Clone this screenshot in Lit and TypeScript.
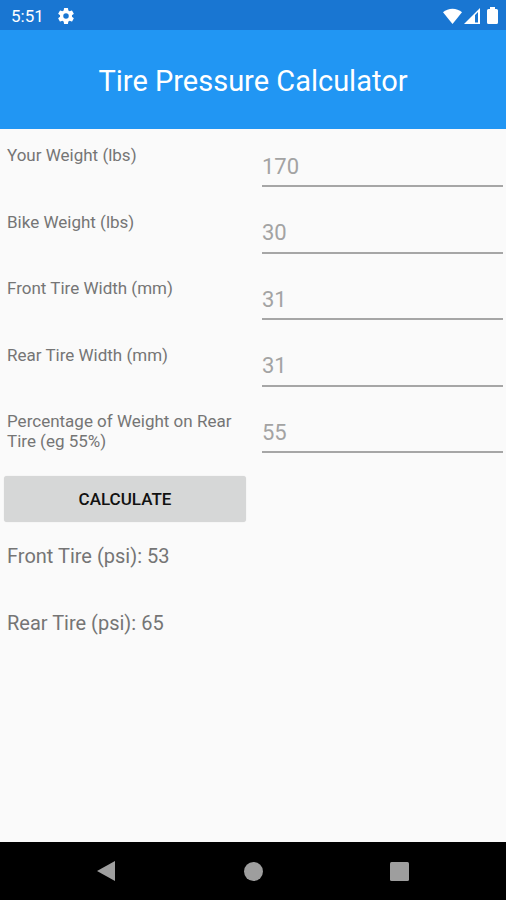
import { LitElement, html, css, svg } from "lit";
import { customElement, state } from "lit/decorators.js";

interface Field {
  id: string;
  label: string;
  hint: number;
}

const FIELDS: Field[] = [
  { id: "rider", label: "Your Weight (lbs)", hint: 170 },
  { id: "bike", label: "Bike Weight (lbs)", hint: 30 },
  { id: "front", label: "Front Tire Width (mm)", hint: 31 },
  { id: "rear", label: "Rear Tire Width (mm)", hint: 31 },
  { id: "share", label: "Percentage of Weight on Rear Tire (eg 55%)", hint: 55 },
];

const PRESSURE_FACTOR = 18.3;

const COG = svg`<path fill-rule="evenodd" d="M19.14 12.94c.04-.3.06-.61.06-.94 0-.32-.02-.64-.07-.94l2.03-1.58a.49.49 0 0 0 .12-.61l-1.92-3.32a.49.49 0 0 0-.59-.22l-2.39.96a7 7 0 0 0-1.62-.94l-.36-2.54a.48.48 0 0 0-.48-.41h-3.84a.48.48 0 0 0-.47.41l-.36 2.54c-.59.24-1.13.57-1.62.94l-2.39-.96a.48.48 0 0 0-.59.22L2.74 8.87a.48.48 0 0 0 .12.61l2.03 1.58c-.05.3-.09.63-.09.94s.02.64.07.94l-2.03 1.58a.49.49 0 0 0-.12.61l1.92 3.32c.12.22.37.29.59.22l2.39-.96c.5.38 1.03.7 1.62.94l.36 2.54c.05.24.24.41.48.41h3.84c.24 0 .44-.17.47-.41l.36-2.54a7 7 0 0 0 1.62-.94l2.39.96c.22.08.47 0 .59-.22l1.92-3.32a.48.48 0 0 0-.12-.61zM12 15.3a3.3 3.3 0 1 1 0-6.6 3.3 3.3 0 0 1 0 6.6z"/>`;

@customElement("app-root")
export class AppRoot extends LitElement {
  static styles = css`
    :host {
      display: flex;
      flex-direction: column;
      min-height: 100vh;
      background: #fafafa;
      color: #757575;
      font-family: Roboto, "Liberation Sans", sans-serif;
      font-size: 17px;
      line-height: 20px;
    }
    svg {
      display: block;
      fill: currentColor;
    }
    .status {
      display: flex;
      align-items: center;
      box-sizing: border-box;
      height: 30px;
      padding: 1px 8px 0 11px;
      background: #1976d2;
      color: #fff;
    }
    .cog {
      margin-left: 12px;
    }
    .signals {
      display: flex;
      align-items: center;
      gap: 2px;
      margin-left: auto;
    }
    .battery {
      margin-left: 5px;
    }
    .title {
      padding: 33px 16px 30px;
      background: #2196f3;
      color: #fff;
      text-align: center;
    }
    h1 {
      margin: 0;
      font-size: 29px;
      line-height: 36px;
      font-weight: 400;
    }
    main {
      flex: 1;
    }
    form {
      display: grid;
      grid-template-columns: 1fr 1fr;
      grid-template-rows: repeat(8, 1fr);
      column-gap: 6px;
      min-height: 532px;
      padding-top: 14px;
    }
    label {
      padding: 2px 8px 0 7px;
    }
    .entry {
      box-sizing: border-box;
      align-self: start;
      min-width: 0;
      width: auto;
      height: 44px;
      margin: 0 3px 0 6px;
      padding: 4px 0 0;
      border: 0;
      border-bottom: 2px solid #a6a6a6;
      border-radius: 0;
      outline: none;
      background: none;
      color: #212121;
      font: inherit;
      font-size: 22px;
    }
    .entry::placeholder {
      color: #a3a3a3;
      opacity: 1;
    }
    .calculate {
      align-self: start;
      height: 46px;
      margin: 0 4px;
      padding: 0;
      border: 0;
      border-radius: 3px;
      background: #d6d7d7;
      box-shadow: 0 0 1px #d6d7d7;
      color: #111;
      font: inherit;
      font-weight: 500;
      text-transform: uppercase;
    }
    .result {
      grid-column: 1 / -1;
      padding: 2px 8px 0 7px;
      font-size: 20px;
      line-height: 24px;
    }
    nav {
      display: flex;
      justify-content: center;
      gap: 98px;
      height: 58px;
      background: #000;
    }
    .key {
      display: flex;
      align-items: center;
      justify-content: center;
      width: 48px;
      padding: 0;
      border: 0;
      background: none;
      color: #9e9e9e;
    }
  `;

  @state() private frontPsi = 53;
  @state() private rearPsi = 65;

  private calculate(event: Event) {
    event.preventDefault();
    const data = new FormData(event.target as HTMLFormElement);
    const [rider, bike, front, rear, share] = FIELDS.map(
      (field) => Number(data.get(field.id)) || field.hint
    );
    const load = rider + bike;
    this.frontPsi = Math.round((load * (1 - share / 100) * PRESSURE_FACTOR) / front);
    this.rearPsi = Math.round((load * (share / 100) * PRESSURE_FACTOR) / rear);
  }

  render() {
    return html`
      <div class="status">
        <span>5:51</span>
        <svg class="cog" width="20" height="20" viewBox="0 0 24 24" aria-hidden="true">${COG}</svg>
        <div class="signals" aria-hidden="true">
          <svg width="19" height="16" viewBox="0 0 19 16">
            <path d="M0 4.2C5-.5 14-.5 19 4.2L9.5 16z" />
          </svg>
          <svg width="16" height="16" viewBox="0 0 16 16">
            <path fill-rule="evenodd" d="M0 16L16 0v16zM11 7v7.500h3V4z" />
          </svg>
          <svg class="battery" width="11" height="17" viewBox="0 0 11 17">
            <path d="M3 0h5v2h1.5Q11 2 11 3.500V15.500Q11 17 9.500 17h-8Q0 17 0 15.500V3.500Q0 2 1.500 2H3z" />
          </svg>
        </div>
      </div>
      <header class="title"><h1>Tire Pressure Calculator</h1></header>
      <main>
        <form @submit=${this.calculate}>
          ${FIELDS.map(
            (field) => html`
              <label for=${field.id}>${field.label}</label>
              <input
                class="entry"
                id=${field.id}
                name=${field.id}
                inputmode="numeric"
                autocomplete="off"
                placeholder=${field.hint}
              />
            `
          )}
          <button class="calculate" type="submit">Calculate</button>
          <output class="result">Front Tire (psi): ${this.frontPsi}</output>
          <output class="result">Rear Tire (psi): ${this.rearPsi}</output>
        </form>
      </main>
      <nav>
        <button class="key" type="button" aria-label="Back">
          <svg width="20" height="20" viewBox="0 0 20 20"><path d="M0 10L18 0v20z" /></svg>
        </button>
        <button class="key" type="button" aria-label="Home">
          <svg width="19" height="19" viewBox="0 0 19 19"><circle cx="9.5" cy="9.5" r="9.5" /></svg>
        </button>
        <button class="key" type="button" aria-label="Overview">
          <svg width="19" height="19" viewBox="0 0 19 19"><rect width="19" height="19" rx="1.5" /></svg>
        </button>
      </nav>
    `;
  }
}
